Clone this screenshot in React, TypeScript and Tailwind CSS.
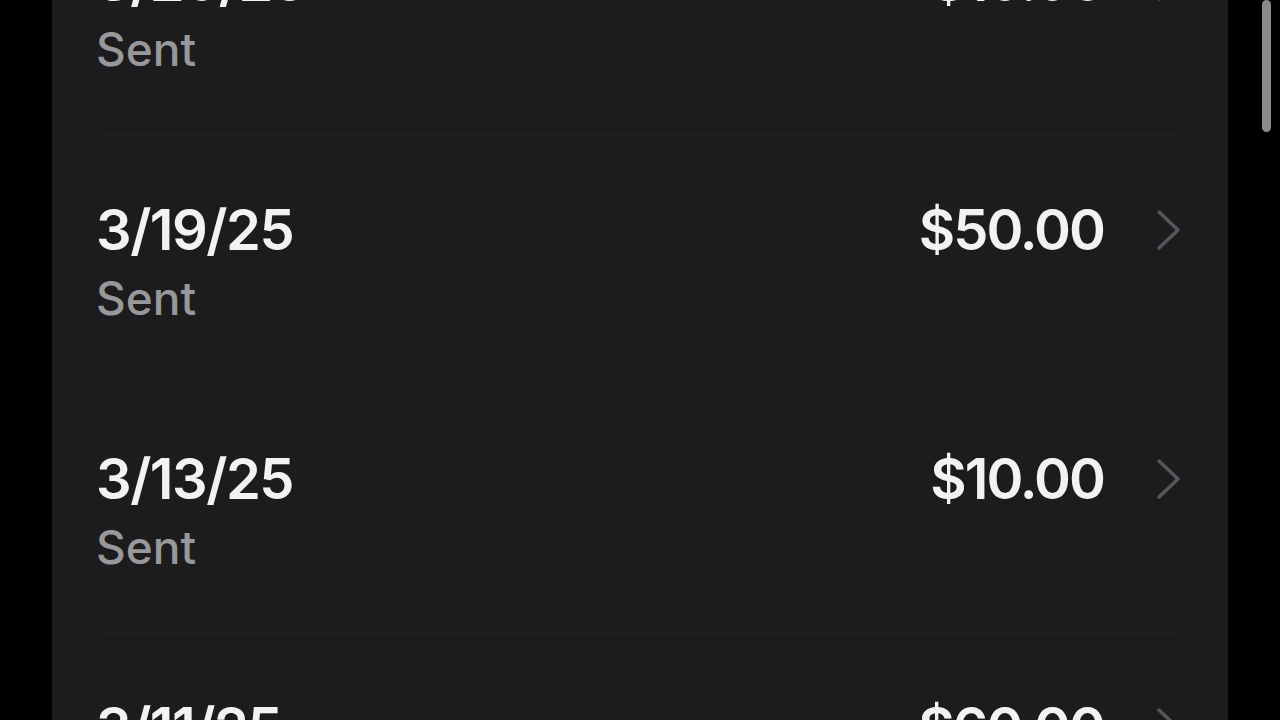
import React from "react";

const rows = [
  { date: "3/20/25", amount: "$10.00" },
  { date: "3/19/25", amount: "$50.00" },
  { date: "3/13/25", amount: "$10.00" },
  { date: "3/11/25", amount: "$60.00" },
];

function Chevron() {
  return (
    <svg width="30" height="44" viewBox="0 0 30 44" fill="none" className="shrink-0">
      <path d="M5 4 L24 22 L5 40" stroke="#56565b" strokeWidth="3.5" strokeLinecap="round" strokeLinejoin="round" />
    </svg>
  );
}

export default function App() {
  return (
    <div className="relative w-[1280px] h-[720px] overflow-hidden bg-black flex" style={{ fontFamily: "Inter, 'Noto Sans', sans-serif" }}>
      <div className="ml-[52px] w-[1176px] h-full bg-[#1c1c1e] overflow-hidden">
        <div className="-mt-[113px] flex flex-col">
          {rows.map((r, i) => (
            <div key={i} className="flex flex-col">
              {i > 0 && <div className="ml-[48px] mr-[48px] h-[2px] bg-[#202022]" />}
              <div className="h-[247px] pl-[44px] pr-[44px] pt-[60px] flex items-start">
                <div className="flex-1 flex flex-col">
                  <div className="text-[56px] leading-[68px] font-semibold text-[#f2f2f2] tracking-[-1.5px]">{r.date}</div>
                  <div className="text-[46px] leading-[68px] font-medium text-[#98989b]">Sent</div>
                </div>
                <div className="flex items-center h-[68px] gap-[50px]">
                  <div className="text-[56px] leading-[68px] font-semibold text-[#f2f2f2] tracking-[-2px]">{r.amount}</div>
                  <Chevron />
                </div>
              </div>
            </div>
          ))}
        </div>
      </div>
      <div className="absolute left-[1262px] top-0 w-[9px] h-[132px] rounded-full bg-[#8a8a8c]" />
    </div>
  );
}
